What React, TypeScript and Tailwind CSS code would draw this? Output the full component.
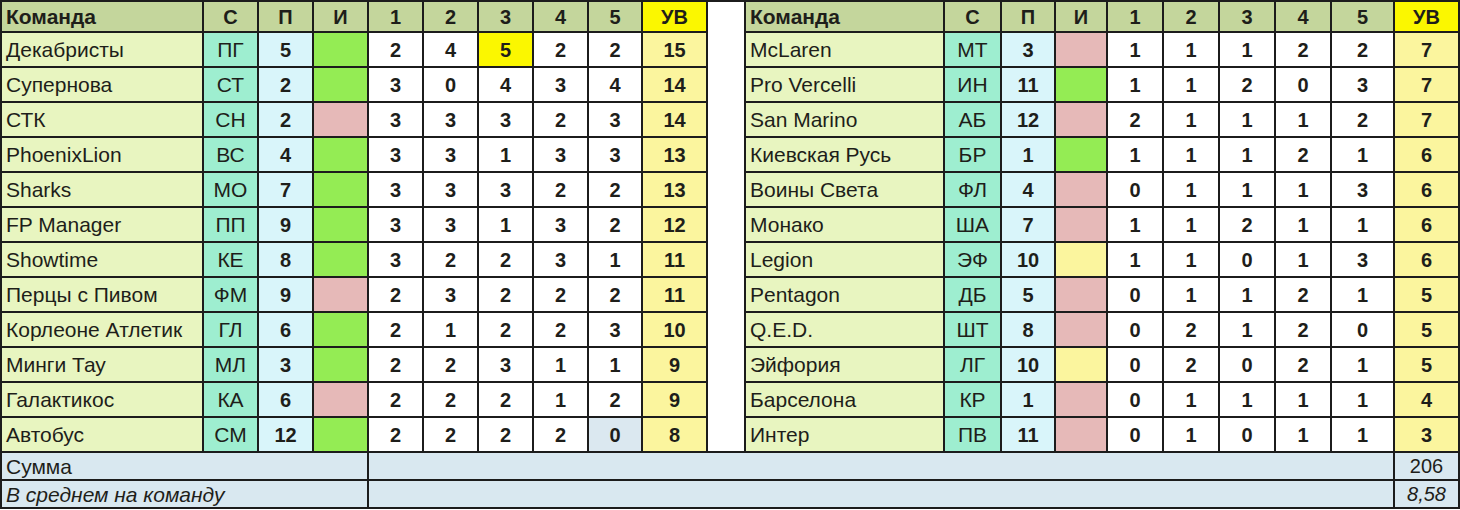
import React from "react";

type Mark = "g" | "p" | "y";

interface Row {
  name: string;
  code: string;
  p: number;
  mark: Mark;
  scores: number[];
  total: number;
  hi?: number; // highlighted yellow score
  blue?: number; // highlighted blue score
}

const left: Row[] = [
  { name: "Декабристы", code: "ПГ", p: 5, mark: "g", scores: [2, 4, 5, 2, 2], total: 15, hi: 2 },
  { name: "Супернова", code: "СТ", p: 2, mark: "g", scores: [3, 0, 4, 3, 4], total: 14 },
  { name: "СТК", code: "СН", p: 2, mark: "p", scores: [3, 3, 3, 2, 3], total: 14 },
  { name: "PhoenixLion", code: "ВС", p: 4, mark: "g", scores: [3, 3, 1, 3, 3], total: 13 },
  { name: "Sharks", code: "МО", p: 7, mark: "g", scores: [3, 3, 3, 2, 2], total: 13 },
  { name: "FP Manager", code: "ПП", p: 9, mark: "g", scores: [3, 3, 1, 3, 2], total: 12 },
  { name: "Showtime", code: "КЕ", p: 8, mark: "g", scores: [3, 2, 2, 3, 1], total: 11 },
  { name: "Перцы с Пивом", code: "ФМ", p: 9, mark: "p", scores: [2, 3, 2, 2, 2], total: 11 },
  { name: "Корлеоне Атлетик", code: "ГЛ", p: 6, mark: "g", scores: [2, 1, 2, 2, 3], total: 10 },
  { name: "Минги Тау", code: "МЛ", p: 3, mark: "g", scores: [2, 2, 3, 1, 1], total: 9 },
  { name: "Галактикос", code: "КА", p: 6, mark: "p", scores: [2, 2, 2, 1, 2], total: 9 },
  { name: "Автобус", code: "СМ", p: 12, mark: "g", scores: [2, 2, 2, 2, 0], total: 8, blue: 4 },
];

const right: Row[] = [
  { name: "McLaren", code: "МТ", p: 3, mark: "p", scores: [1, 1, 1, 2, 2], total: 7 },
  { name: "Pro Vercelli", code: "ИН", p: 11, mark: "g", scores: [1, 1, 2, 0, 3], total: 7 },
  { name: "San Marino", code: "АБ", p: 12, mark: "p", scores: [2, 1, 1, 1, 2], total: 7 },
  { name: "Киевская Русь", code: "БР", p: 1, mark: "g", scores: [1, 1, 1, 2, 1], total: 6 },
  { name: "Воины Света", code: "ФЛ", p: 4, mark: "p", scores: [0, 1, 1, 1, 3], total: 6 },
  { name: "Монако", code: "ША", p: 7, mark: "p", scores: [1, 1, 2, 1, 1], total: 6 },
  { name: "Legion", code: "ЭФ", p: 10, mark: "y", scores: [1, 1, 0, 1, 3], total: 6 },
  { name: "Pentagon", code: "ДБ", p: 5, mark: "p", scores: [0, 1, 1, 2, 1], total: 5 },
  { name: "Q.E.D.", code: "ШТ", p: 8, mark: "p", scores: [0, 2, 1, 2, 0], total: 5 },
  { name: "Эйфория", code: "ЛГ", p: 10, mark: "y", scores: [0, 2, 0, 2, 1], total: 5 },
  { name: "Барселона", code: "КР", p: 1, mark: "p", scores: [0, 1, 1, 1, 1], total: 4 },
  { name: "Интер", code: "ПВ", p: 11, mark: "p", scores: [0, 1, 0, 1, 1], total: 3 },
];

const markBg: Record<Mark, string> = {
  g: "bg-[#94ec54]",
  p: "bg-[#e6b9b8]",
  y: "bg-[#fbf59e]",
};

function HeaderCells() {
  return (
    <>
      <div className="bg-[#c4d69c] pl-[4px] flex items-center font-bold text-[21px]">Команда</div>
      {["С", "П", "И", "1", "2", "3", "4", "5"].map((h) => (
        <div key={h} className="bg-[#c4d69c] flex items-center justify-center font-bold">
          {h}
        </div>
      ))}
      <div className="bg-[#fbf700] flex items-center justify-center font-bold">УВ</div>
    </>
  );
}

function RowCells({ row }: { row: Row }) {
  return (
    <>
      <div className="bg-[#e8f5c0] pl-[4px] flex items-center whitespace-nowrap overflow-hidden text-[21px]">
        {row.name}
      </div>
      <div className="bg-[#9eeed0] flex items-center justify-center text-[21px]">{row.code}</div>
      <div className="bg-[#d9f5fa] flex items-center justify-center font-bold">{row.p}</div>
      <div className={markBg[row.mark]} />
      {row.scores.map((s, i) => (
        <div
          key={i}
          className={`flex items-center justify-center font-bold ${
            row.hi === i ? "bg-[#fbf700]" : row.blue === i ? "bg-[#dbe8f0]" : "bg-white"
          }`}
        >
          {s}
        </div>
      ))}
      <div className="bg-[#fbf59e] flex items-center justify-center font-bold">{row.total}</div>
    </>
  );
}

export default function App() {
  return (
    <div
      className="w-[1460px] h-[510px] bg-white text-[#1e1e1a] text-[20px] leading-none"
      style={{ fontFamily: '"Liberation Sans", Arial, sans-serif' }}
    >
      <div className="grid grid-cols-[200px_53px_53px_53px_53px_53px_53px_53px_52px_63px_36px_197px_55px_52px_50px_54px_54px_54px_54px_61px_63px] grid-rows-[29px_repeat(12,33px)_26px_26px] gap-[2px] p-[2px] bg-[#1c1c1c]">
        <HeaderCells />
        <div className="bg-white row-span-13" />
        <HeaderCells />
        {left.map((r, i) => (
          <React.Fragment key={i}>
            <RowCells row={r} />
            <RowCells row={right[i]} />
          </React.Fragment>
        ))}

        <div className="col-span-4 bg-[#d9e8f0] pl-[4px] flex items-center text-[21px]">Сумма</div>
        <div className="col-span-16 bg-[#d9e8f0]" />
        <div className="bg-[#d9e8f0] flex items-center justify-center">206</div>

        <div className="col-span-4 bg-[#d9e8f0] pl-[4px] flex items-center italic text-[21px]">
          В среднем на команду
        </div>
        <div className="col-span-16 bg-[#d9e8f0]" />
        <div className="bg-[#d9e8f0] flex items-center justify-center italic">8,58</div>
      </div>
    </div>
  );
}
